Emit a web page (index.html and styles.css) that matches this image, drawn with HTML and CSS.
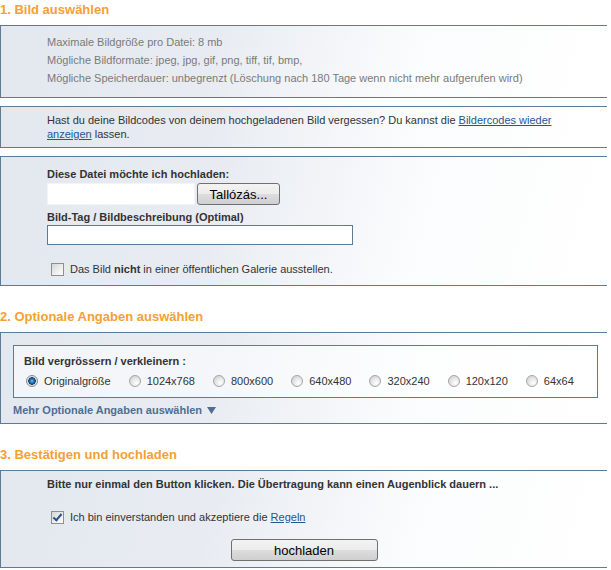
FILE: index.html
```html
<!DOCTYPE html>
<html lang="de">

<head>
	<meta charset="utf-8">
	<meta name="viewport" content="width=device-width, initial-scale=1">
	<title>Bild hochladen</title>
	<link rel="stylesheet" href="styles.css">
</head>

<body>
	<form class="upload-page">
		<h2 class="step">1. Bild auswählen</h2>
		<div class="panel info">
			<p>Maximale Bildgröße pro Datei: 8 mb</p>
			<p>Mögliche Bildformate: jpeg, jpg, gif, png, tiff, tif, bmp,</p>
			<p>Mögliche Speicherdauer: unbegrenzt (Löschung nach 180 Tage wenn nicht mehr aufgerufen wird)</p>
		</div>

		<div class="panel note">
			Hast du deine Bildcodes von deinem hochgeladenen Bild vergessen? Du kannst die <a href="#">Bildercodes wieder
				anzeigen</a> lassen.
		</div>

		<div class="panel upload">
			<label class="field-label" for="fileName">Diese Datei möchte ich hochladen:</label>
			<div class="file-row">
				<input type="text" id="fileName" class="file-name" readonly>
				<button type="button" class="btn browse">Tallózás...</button>
			</div>
			<label class="field-label tag-label" for="tagInput">Bild-Tag / Bildbeschreibung (Optimal)</label>
			<input type="text" id="tagInput" class="text-field">
			<label class="check-row">
				<input type="checkbox" class="check">
				<span>Das Bild <b>nicht</b> in einer öffentlichen Galerie ausstellen.</span>
			</label>
		</div>

		<h2 class="step">2. Optionale Angaben auswählen</h2>
		<div class="panel options">
			<div class="size-box">
				<div class="field-label">Bild vergrössern / verkleinern :</div>
				<div class="radio-row">
					<label><input type="radio" name="size" class="radio" checked> Originalgröße</label>
					<label><input type="radio" name="size" class="radio"> 1024x768</label>
					<label><input type="radio" name="size" class="radio"> 800x600</label>
					<label><input type="radio" name="size" class="radio"> 640x480</label>
					<label><input type="radio" name="size" class="radio"> 320x240</label>
					<label><input type="radio" name="size" class="radio"> 120x120</label>
					<label><input type="radio" name="size" class="radio"> 64x64</label>
				</div>
			</div>
			<a href="#" class="more">Mehr Optionale Angaben auswählen
				<svg width="9" height="7" viewBox="0 0 9 7"><path d="M0 0h9L4.5 7z" fill="#4d6e90"/></svg>
			</a>
		</div>

		<h2 class="step">3. Bestätigen und hochladen</h2>
		<div class="panel confirm">
			<div class="field-label">Bitte nur einmal den Button klicken. Die Übertragung kann einen Augenblick dauern ...</div>
			<label class="check-row">
				<input type="checkbox" class="check" checked>
				<span>Ich bin einverstanden und akzeptiere die <a href="#">Regeln</a></span>
			</label>
			<div class="submit-row">
				<button type="button" class="btn submit">hochladen</button>
			</div>
		</div>
	</form>
</body>

</html>
```

FILE: styles.css
```css
* {
	box-sizing: border-box;
}

body {
	margin: 0;
	background-color: #ffffff;
	font-family: "Liberation Sans", Arial, sans-serif;
	font-size: 11px;
	color: #333333;
}

.upload-page {
	width: 607px;
}

.step {
	margin: 21px 0 0;
	padding: 2px 0 7px;
	font-size: 13px;
	line-height: 16px;
	font-weight: bold;
	color: #f5a032;
}

.step:first-child {
	margin-top: 0;
}

.panel {
	border-top: 1px solid #5d7b95;
	border-bottom: 1px solid #5d7b95;
	border-left: 1px solid #5d7b95;
	padding-left: 46px;
	background: linear-gradient(105deg, #e3e8ef 0%, #e8ecf2 35%, #fbfcfd 68%, #ffffff 100%);
}

.panel a {
	color: #245596;
}

.info {
	padding-top: 7px;
	padding-bottom: 10px;
	color: #7a7a7a;
}

.info p {
	margin: 0;
	line-height: 18px;
}

.note {
	margin-top: 8px;
	padding-top: 6px;
	padding-bottom: 6px;
	padding-right: 52px;
	line-height: 14px;
}

.upload {
	margin-top: 8px;
	padding-top: 10px;
	padding-bottom: 9px;
}

.field-label {
	display: block;
	font-weight: bold;
	line-height: 14px;
	color: #333333;
}

.file-row {
	display: flex;
	gap: 2px;
	margin-top: 2px;
}

.file-name {
	width: 148px;
	height: 22px;
	border: 1px solid #f2f4f7;
	background-color: #ffffff;
}

.btn {
	font-family: "Liberation Sans", Arial, sans-serif;
	font-size: 13px;
	color: #000000;
	border: 1px solid #707070;
	border-radius: 3px;
	background: linear-gradient(#f3f3f3 0%, #ececec 48%, #dddddd 52%, #cfcfcf 100%);
	padding: 0;
	cursor: pointer;
}

.browse {
	width: 83px;
	height: 22px;
}

.tag-label {
	margin-top: 5px;
}

.text-field {
	display: block;
	width: 306px;
	height: 20px;
	margin-top: 1px;
	border: 1px solid #5d7b95;
	background-color: #ffffff;
}

.check-row {
	display: flex;
	align-items: center;
	gap: 6px;
	padding-left: 4px;
	line-height: 14px;
	color: #333333;
}

.upload .check-row {
	margin-top: 17px;
}

.check {
	appearance: none;
	-webkit-appearance: none;
	position: relative;
	width: 13px;
	height: 13px;
	margin: 0;
	border: 1px solid #8e8f8f;
	background: linear-gradient(135deg, #d6d6d6 0%, #f0f0f0 60%, #fbfbfb 100%);
}

.check:checked::after {
	content: "";
	position: absolute;
	left: 3px;
	top: 0px;
	width: 3px;
	height: 7px;
	border-right: 2px solid #2a4f8a;
	border-bottom: 2px solid #2a4f8a;
	transform: rotate(40deg);
}

.options {
	padding: 12px 9px 6px 12px;
}

.size-box {
	border: 1px solid #5d7b95;
	padding: 8px 10px 9px;
	background-color: rgba(255, 255, 255, 0.55);
}

.radio-row {
	display: flex;
	gap: 18px;
	margin-top: 6px;
	padding-left: 2px;
	line-height: 14px;
}

.radio-row label {
	display: flex;
	align-items: center;
	gap: 6px;
}

.radio {
	appearance: none;
	-webkit-appearance: none;
	width: 12px;
	height: 12px;
	margin: 0;
	border: 1px solid #a5a5a5;
	border-radius: 50%;
	background: radial-gradient(circle at 65% 70%, #ffffff 0%, #e8e8e8 45%, #c9c9c9 100%);
}

.radio:checked {
	border-color: #7d8a96;
	background: radial-gradient(circle at 50% 50%, #6cc4f0 0px, #1f75ad 2px, #0d3c66 3.5px, #dcdcdc 4px, #f6f6f6 6px);
}

.options .more {
	display: inline-flex;
	align-items: center;
	gap: 5px;
	margin-top: 5px;
	font-weight: bold;
	line-height: 14px;
	color: #4d6e90;
	text-decoration: none;
}

.confirm {
	padding-top: 6px;
	padding-bottom: 6px;
}

.confirm .check-row {
	margin-top: 19px;
}

.submit-row {
	display: flex;
	justify-content: center;
	margin-top: 15px;
	margin-left: -46px;
}

.submit {
	width: 147px;
	height: 22px;
}
```
